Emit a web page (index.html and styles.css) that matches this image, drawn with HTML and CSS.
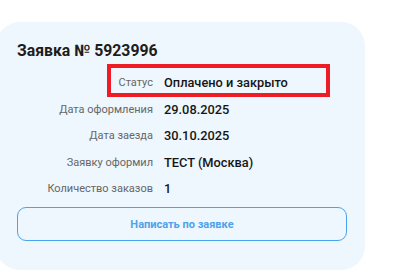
FILE: index.html
```html
<!DOCTYPE html>
<html lang="ru">
<head>
    <meta charset="UTF-8">
    <meta name="viewport" content="width=device-width, initial-scale=1.0">
    <title>Заявка</title>
    <link rel="stylesheet" href="styles.css">
</head>
<body>
    <!-- Order card -->
    <div class="order-card">
        <h2 class="order-title">Заявка № 5923996</h2>

        <div class="order-info">
            <div class="info-row highlighted">
                <span class="info-label">Статус</span>
                <span class="info-value">Оплачено и закрыто</span>
            </div>
            <div class="info-row">
                <span class="info-label">Дата оформления</span>
                <span class="info-value">29.08.2025</span>
            </div>
            <div class="info-row">
                <span class="info-label">Дата заезда</span>
                <span class="info-value">30.10.2025</span>
            </div>
            <div class="info-row">
                <span class="info-label">Заявку оформил</span>
                <span class="info-value">ТЕСТ (Москва)</span>
            </div>
            <div class="info-row">
                <span class="info-label">Количество заказов</span>
                <span class="info-value">1</span>
            </div>
        </div>

        <button class="write-btn">Написать по заявке</button>
    </div>
</body>
</html>
```

FILE: styles.css
```css
/* General Styles */
body {
    font-family: Roboto, "Liberation Sans", sans-serif;
    margin: 0;
    padding: 0;
    background-color: #fff;
    color: #1b1b1b;
    overflow: hidden;
}

/* Card */
.order-card {
    width: 369px;
    box-sizing: border-box;
    margin: 22px 0 0 -4px;
    padding: 20px 18px 29px 21px;
    background-color: #eef6fe;
    border-radius: 24px;
}

.order-title {
    margin: 0;
    font-size: 15.8px;
    font-weight: 700;
    line-height: 18px;
    color: #1d1d1d;
}

/* Info rows */
.order-info {
    margin-top: 9.5px;
}

.info-row {
    position: relative;
    display: grid;
    grid-template-columns: 136px 1fr;
    column-gap: 11px;
    align-items: center;
    height: 26.5px;
}

.info-label {
    text-align: right;
    font-size: 11px;
    color: #666;
}

.info-value {
    font-size: 12.8px;
    font-weight: 500;
    color: #151515;
}

/* Red annotation frame */
.highlighted::after {
    content: "";
    position: absolute;
    left: 90px;
    top: -6px;
    width: 215px;
    height: 25px;
    border: 4.5px solid #ee1c25;
}

/* Button */
.write-btn {
    display: block;
    width: 100%;
    height: 34px;
    margin-top: 5px;
    background: none;
    border: 1.5px solid #4aa3ee;
    border-radius: 9px;
    font-family: inherit;
    font-size: 11px;
    font-weight: 700;
    color: #4ea3ea;
    cursor: pointer;
}
```
